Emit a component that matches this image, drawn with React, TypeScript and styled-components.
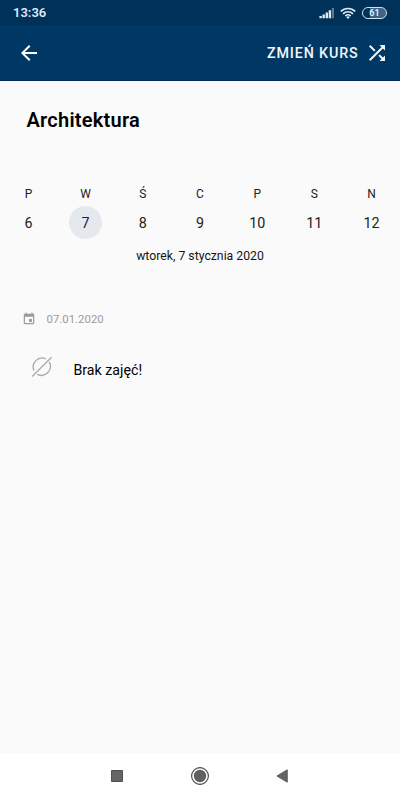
import React from "react";
import styled, { createGlobalStyle } from "styled-components";

const GlobalStyle = createGlobalStyle`
  * { box-sizing: border-box; }
  body { margin: 0; background: #fafafa; font-family: Roboto, sans-serif; color: #000; }
  svg { display: block; flex: none; }
`;

const Screen = styled.div`
  width: 400px;
  height: 800px;
  display: flex;
  flex-direction: column;
  background: #fafafa;
  overflow: hidden;
`;

const StatusBar = styled.header`
  height: 25px;
  flex: none;
  display: flex;
  align-items: center;
  justify-content: space-between;
  padding: 0 13px;
  background: #003158;
`;

const Clock = styled.span`
  font-size: 13px;
  line-height: 25px;
  font-weight: 600;
  color: #dbeaf8;
`;

const StatusIcons = styled.div`
  display: flex;
  align-items: center;
  gap: 5px;
`;

const Battery = styled.div`
  width: 25px;
  height: 12px;
  margin-left: 1px;
  border: 1.5px solid #d3e0ec;
  border-radius: 6px;
  background: linear-gradient(90deg, #003158 32%, #3d6484 32%);
  color: #e9f2fa;
  font-size: 9px;
  font-weight: 600;
  line-height: 10px;
  text-align: center;
`;

const AppBar = styled.nav`
  height: 56px;
  flex: none;
  display: flex;
  align-items: center;
  justify-content: space-between;
  padding: 0 11.5px 0 16.5px;
  background: #003865;
  border-bottom: 1px solid #052a59;
  color: #fff;
`;

const ChangeCourse = styled.button`
  display: flex;
  align-items: center;
  gap: 6px;
  padding: 0;
  border: 0;
  background: none;
  color: #f2f7fb;
  font: 500 14.3px/20px Roboto, sans-serif;
  letter-spacing: 0.85px;
`;

const ButtonLabel = styled.span`
  padding-top: 1px;
`;

const Content = styled.main`
  flex: 1;
`;

const Title = styled.h1`
  margin: 27px 0 0 26.5px;
  font-size: 20px;
  line-height: 24px;
  font-weight: 600;
  letter-spacing: 0.24px;
`;

const Week = styled.div`
  display: grid;
  grid-template-columns: repeat(7, 57.2px);
  justify-content: center;
  margin-top: 54px;
`;

const Day = styled.div`
  display: flex;
  flex-direction: column;
  align-items: center;
`;

const DayName = styled.span`
  font-size: 12px;
  line-height: 16px;
  color: #222;
`;

const DayNumber = styled.span<{ $selected: boolean }>`
  width: 33px;
  height: 33px;
  margin-top: 4px;
  border-radius: 50%;
  font-size: 14.3px;
  line-height: 34px;
  text-align: center;
  color: ${(p) => (p.$selected ? "#062c4c" : "#222")};
  background: ${(p) => (p.$selected ? "#e5e9ee" : "transparent")};
`;

const FullDate = styled.p`
  margin: 9px 0 0;
  font-size: 12.25px;
  line-height: 16px;
  text-align: center;
  color: #151515;
`;

const DateRow = styled.div`
  display: flex;
  align-items: center;
  gap: 10.5px;
  margin: 47px 0 0 22px;
  height: 16px;
  color: #9a9a9a;
  font-size: 11.4px;
`;

const EmptyRow = styled.div`
  display: flex;
  align-items: center;
  gap: 19.5px;
  margin: 28px 0 0 30px;
  height: 24px;
  font-size: 14.2px;
`;

const EmptyText = styled.span`
  padding-top: 5px;
`;

const NavBar = styled.footer`
  height: 47px;
  flex: none;
  display: grid;
  grid-template-columns: repeat(3, 82.5px);
  justify-content: center;
  justify-items: center;
  align-items: center;
  padding: 0 1px 1px 0;
  background: #fff;
`;

const days: [string, number][] = [
  ["P", 6], ["W", 7], ["Ś", 8], ["C", 9], ["P", 10], ["S", 11], ["N", 12],
];

const SignalIcon = () => (
  <svg width="16" height="12" viewBox="0 0 16 12" fill="#dce8f3">
    <path d="M.4 9h2.4v2.3H.4zM3.5 7.5h2.4v3.8H3.5zM6.6 5.5H9v5.8H6.6zM9.7 3.2h2.4v8.1H9.7z" />
    <path d="M12.8 1h2.2v10.3h-2.2z" opacity=".4" />
  </svg>
);

const WifiIcon = () => (
  <svg width="16" height="12" viewBox="0 0 16 12" fill="none" stroke="#dce8f3" strokeWidth="1.7">
    <path d="M.8 4.5a10.2 10.2 0 0 1 14.4 0M3 6.8a7.1 7.1 0 0 1 10 0M5.3 9a3.9 3.9 0 0 1 5.4 0" />
    <path d="M6.2 10a2.6 2.6 0 0 1 3.6 0L8 11.9z" fill="#dce8f3" stroke="none" />
  </svg>
);

export default function App() {
  return (
    <>
      <GlobalStyle />
      <Screen>
        <StatusBar>
          <Clock>13:36</Clock>
          <StatusIcons>
            <SignalIcon />
            <WifiIcon />
            <Battery>61</Battery>
          </StatusIcons>
        </StatusBar>
        <AppBar>
          <svg width="24" height="24" viewBox="0 0 24 24" fill="currentColor">
            <path d="M20 11H7.83l5.59-5.59L12 4l-8 8 8 8 1.41-1.41L7.83 13H20v-2z" />
          </svg>
          <ChangeCourse>
            <ButtonLabel>ZMIEŃ KURS</ButtonLabel>
            <svg width="24" height="24" viewBox="0 0 24 24" fill="currentColor">
              <path d="M10.59 9.17 5.41 4 4 5.41l5.17 5.17 1.42-1.41zM14.5 4l2.04 2.04L4 18.59 5.41 20 17.96 7.46 20 9.5V4h-5.5zm.33 9.41-1.41 1.41 3.13 3.13L14.5 20H20v-5.5l-2.04 2.04-3.13-3.13z" />
            </svg>
          </ChangeCourse>
        </AppBar>
        <Content>
          <Title>Architektura</Title>
          <Week>
            {days.map(([name, n]) => (
              <Day key={n}>
                <DayName>{name}</DayName>
                <DayNumber $selected={n === 7}>{n}</DayNumber>
              </Day>
            ))}
          </Week>
          <FullDate>wtorek, 7 stycznia 2020</FullDate>
          <DateRow>
            <svg width="14" height="14" viewBox="0 0 24 24" fill="currentColor">
              <path d="M17 12h-5v5h5v-5zM16 1v2H8V1H6v2H5c-1.11 0-1.99.9-1.99 2L3 19c0 1.1.89 2 2 2h14c1.1 0 2-.9 2-2V5c0-1.1-.9-2-2-2h-1V1h-2zm3 18H5V8h14v11z" />
            </svg>
            07.01.2020
          </DateRow>
          <EmptyRow>
            <svg width="24" height="24" viewBox="0 0 24 24" fill="none" stroke="#a9a9a9" strokeWidth="1.3">
              <path d="M2.2 21.5 21.5 2.2M19.2 6.9A9 9 0 0 1 7.4 19.4M15.8 3.8A9 9 0 0 0 3.9 15.5" />
            </svg>
            <EmptyText>Brak zajęć!</EmptyText>
          </EmptyRow>
        </Content>
        <NavBar>
          <svg width="12" height="12" viewBox="0 0 12 12">
            <path d="M.5.5h11v11H.5z" fill="#656565" stroke="#505050" />
          </svg>
          <svg width="18" height="18" viewBox="0 0 18 18">
            <circle cx="9" cy="9" r="8.4" fill="none" stroke="#444" strokeWidth="1.1" />
            <circle cx="9" cy="9" r="6.2" fill="#606060" />
          </svg>
          <svg width="12" height="14" viewBox="0 0 12 14">
            <path d="M.8 7 11.3.8v12.4z" fill="#656565" stroke="#505050" strokeWidth=".8" />
          </svg>
        </NavBar>
      </Screen>
    </>
  );
}
